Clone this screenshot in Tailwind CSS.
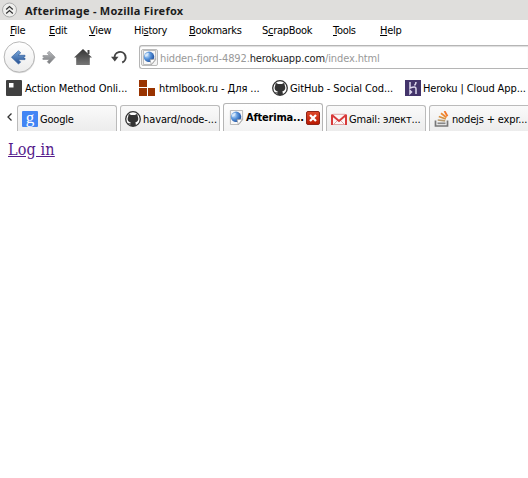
<!DOCTYPE html>
<html lang="en">
<head>
<meta charset="utf-8">
<title>Afterimage</title>
<script src="https://cdn.jsdelivr.net/npm/@tailwindcss/browser@4"></script>
</head>
<body class="w-[528px] h-[478px] overflow-hidden bg-white text-black text-[11px] leading-[14px] whitespace-nowrap font-['DejaVu_Sans_Condensed','DejaVu_Sans',sans-serif] tracking-[-0.2px]">
<svg class="absolute size-0">
  <defs>
    <linearGradient id="blue" x2="0" y2="1"><stop stop-color="#79a8dc"/><stop offset="1" stop-color="#244f91"/></linearGradient>
    <linearGradient id="gray" x2="0" y2="1"><stop stop-color="#b8babd"/><stop offset="1" stop-color="#77797c"/></linearGradient>
    <linearGradient id="dark" x2="0" y2="1"><stop stop-color="#333"/><stop offset="1" stop-color="#777"/></linearGradient>
    <linearGradient id="button" x2="0" y2="1"><stop stop-color="#fff"/><stop offset="1" stop-color="#ececec"/></linearGradient>
    <linearGradient id="red" x2="0" y2="1"><stop stop-color="#e04a2c"/><stop offset="1" stop-color="#b81800"/></linearGradient>
    <radialGradient id="ball" cx=".3" cy=".35" r=".75"><stop stop-color="#cfe4fa"/><stop offset=".45" stop-color="#5b97dd"/><stop offset="1" stop-color="#1a4a9a"/></radialGradient>
    <symbol id="globe" viewBox="0 0 16 16"><path d="M1.500 .5h13v10l-4 5h-9z" fill="#f8f8f8" stroke="#b5b5b5"/><circle cx="7.500" cy="7.300" r="5.600" fill="url(#ball)"/><path d="M3 5l3-2.200 1.500 1-2 2.700-2 1z" fill="#e4f1fc" opacity=".7"/><path d="M14.500 9.500l-6 1 1.500 5z" fill="#fff" stroke="#999" stroke-width=".7"/></symbol>
    <symbol id="cat" viewBox="0 0 16 16"><circle cx="8" cy="8" r="7.300" fill="#fff" stroke="#333" stroke-width="1.300"/><path d="M3.700 2.800l2.400 1.300q1.900-.4 3.800 0l2.400-1.300.5 2.700c1.400 3.300-.2 5.500-2.600 5.900q.6.600.6 1.600v2H5.400v-1.600c-1.700.2-2-.8-2.700-1.600 1 .1 1.300.9 2.700.6q.1-.6.4-1C3.200 11 1.800 9 3.200 5.500z" fill="#333"/></symbol>
  </defs>
</svg>

<header class="flex h-5 items-center bg-[#dfdedc]">
  <svg class="ml-[1px] mr-2 shrink-0" width="16" height="17" viewBox="0 0 16 17"><circle cx="8.500" cy="8" r="7" fill="#efefed" stroke="#aaa"/><path d="M5.200 7.500L8.500 4.500 11.800 7.500M5.200 11.500L8.500 8.500l3.300 3" fill="none" stroke="#333" stroke-width="1.200"/></svg>
  <h1 class="mt-px text-[11px] font-bold text-[#1c1c1c] font-['Noto_Sans',sans-serif] tracking-[0.26px]">Afterimage - Mozilla Firefox</h1>
</header>

<nav class="flex h-5 items-center pl-[10px] pt-0.5 tracking-[-0.3px]">
  <span class="w-[39px]"><u>F</u>ile</span>
  <span class="w-10"><u>E</u>dit</span>
  <span class="w-[45px]"><u>V</u>iew</span>
  <span class="w-[55px]">Hi<u>s</u>tory</span>
  <span class="w-[73px]"><u>B</u>ookmarks</span>
  <span class="w-[71px]">S<u>c</u>rapBook</span>
  <span class="w-[47px]"><u>T</u>ools</span>
  <span><u>H</u>elp</span>
</nav>

<div class="flex h-[35px] items-center">
  <svg class="ml-[2px] shrink-0" width="136" height="35" viewBox="2 40 136 35">
    <circle cx="19.500" cy="57.800" r="15.500" fill="#ddd"/><circle cx="19.300" cy="57" r="15.200" fill="url(#button)" stroke="#b0b0b0" stroke-width=".9"/>
    <path d="M11.500 57.200l7-6.500 2.200 2.200-2.700 2.400h7v1.300h-1.500v1.500H25v1.500h-7l2.700 2.300-2.200 2.200z" fill="url(#blue)" stroke="#315f9d" stroke-width=".7"/>
    <path d="M55.200 57.200l-6-6-2 2 2.200 2.300h-6.500v1.200h1.200v1.300h-1.200v1.500h6.500l-2.200 2.200 2 2z" fill="url(#gray)" stroke="#8b8d90" stroke-width=".6"/>
    <path d="M83 49l9 8.500h-2.200v7.500H76.200v-7.500H74z" fill="url(#dark)"/><path d="M87.500 50h2v4h-2z" fill="#444"/>
    <path d="M114.700 58.500a5.500 5.500 0 1 1 7.500 4" fill="none" stroke="#444" stroke-width="2"/><path d="M111 56.800h7.500l-3.700 4.700z" fill="#444"/>
  </svg>
  <div class="-mt-px ml-px flex h-6 flex-1 items-center rounded-l-[3px] border border-r-0 border-[#b5b5b5] shadow-[inset_0_1px_1px_#ddd]">
    <div class="ml-px flex size-[17px] shrink-0 items-center justify-center rounded-[2px] border border-[#bbb] bg-[#f5f5f5]"><svg width="15" height="15"><use href="#globe"/></svg></div>
    <span class="ml-[2px] mt-[3px] text-[#999] tracking-[-0.12px]">hidden-fjord-4892.<span class="text-[#222]">herokuapp.com</span>/index.html</span>
  </div>
</div>

<div class="flex h-[27px] items-center pl-[6px] tracking-[-0.05px]">
  <svg class="-mt-px mr-[3px] shrink-0" width="16" height="16"><rect width="16" height="16" rx="1" fill="#404040"/><path d="M3 3h4.500v4.500H3z" fill="#fff"/></svg>
  <span class="w-[114px]">Action Method Onli...</span>
  <svg class="-mt-px mr-1 shrink-0" width="16" height="16" fill="#993300"><path d="M0 0h8v7H0zM0 8h8v8H0zM9 8h7v8H9z"/></svg>
  <span class="w-[113px] tracking-[-0.1px]">htmlbook.ru - Для ...</span>
  <svg class="-mt-px mr-[2px] shrink-0" width="16" height="16"><use href="#cat"/></svg>
  <span class="w-[115px] tracking-[-0.1px]">GitHub - Social Cod...</span>
  <svg class="-mt-px mr-[2px] shrink-0" width="16" height="16"><path d="M0 0h16v16H0z" fill="#43346b"/><path d="M5 2v6q6-2.500 6 .8V14M11 2q0 2-1.500 3.500M5 10.500v3l1.500-1.500z" fill="none" stroke="#ddd7ed" stroke-width="1.500"/></svg>
  <span class="tracking-[-0.1px]">Heroku | Cloud App...</span>
</div>

<div class="flex h-[29px] items-end">
  <svg class="mb-[10px] ml-[6px] mr-[5px] shrink-0" width="6" height="8"><path d="M5.500 .5L2 4l3.500 3.500" fill="none" stroke="#333" stroke-width="1.300"/></svg>
  <div class="flex h-[26px] w-[100px] shrink-0 items-center rounded-t-[3px] border border-b-0 border-[#bbb] bg-linear-to-b from-[#fafafa] to-[#ececec] pl-1">
    <svg class="mr-[2px] shrink-0" width="16" height="16"><rect width="16" height="16" rx="1" fill="#4285f4"/><text x="8" y="11.500" text-anchor="middle" fill="#fff" class="text-[17px] font-['Liberation_Serif',serif]">g</text></svg>
    <span class="mt-0.5">Google</span>
  </div>
  <div class="ml-[3px] flex h-[26px] w-[100px] shrink-0 items-center rounded-t-[3px] border border-b-0 border-[#bbb] bg-linear-to-b from-[#fafafa] to-[#ececec] pl-1">
    <svg class="mr-[2px] shrink-0" width="16" height="16"><use href="#cat"/></svg>
    <span class="mt-0.5 tracking-[-0.1px]">havard/node-...</span>
  </div>
  <div class="ml-[3px] flex h-[28px] w-[100px] shrink-0 items-center rounded-t-[3px] border border-b-0 border-[#b5b5b5] bg-linear-to-b from-white to-[#f2f2f2] pl-[5px]">
    <svg class="mr-[2px] shrink-0" width="15" height="15"><use href="#globe"/></svg>
    <b class="mt-px w-[60px]">Afterima...</b>
    <svg class="shrink-0" width="14" height="14"><rect x=".5" y=".5" width="13" height="13" rx="1.500" fill="url(#red)" stroke="#8e2418"/><path d="M4 4l6 6M10 4l-6 6" stroke="#fff" stroke-width="2.300"/></svg>
  </div>
  <div class="ml-[3px] flex h-[26px] w-[100px] shrink-0 items-center rounded-t-[3px] border border-b-0 border-[#bbb] bg-linear-to-b from-[#fafafa] to-[#ececec] pl-1">
    <svg class="mr-[2px] shrink-0" width="16" height="16"><path d="M0 3h16v11H0z" fill="#fbf7f7"/><path d="M2 3.300h12M2 13.500h12M3 13l4-4M13 13L9 9" stroke="#dfa5a5"/><path d="M1 14V3.500M15 14V3.500" stroke="#d83b3b" stroke-width="2"/><path d="M1 4l7 6 7-6" fill="none" stroke="#d83b3b" stroke-width="2"/></svg>
    <span class="mt-0.5">Gmail: элект...</span>
  </div>
  <div class="ml-[3px] flex h-[26px] w-[100px] shrink-0 items-center rounded-tl-[3px] border border-b-0 border-[#bbb] bg-linear-to-b from-[#fafafa] to-[#ececec] pl-1">
    <svg class="mr-[2px] shrink-0" width="16" height="16" fill="none"><path d="M1.500 9.500v5.500h12V9.500" stroke="#777" stroke-width="1.700"/><path d="M3.500 12.300h8" stroke="#888" stroke-width="1.700"/><path d="M3.700 9l7.500.8" stroke="#b59a70" stroke-width="1.700"/><path d="M4.800 5.500l7 2.500" stroke="#d59143" stroke-width="1.700"/><path d="M7 2.200l5.500 4.300" stroke="#ed8b32" stroke-width="1.800"/><path d="M10.500 0l3 5.300" stroke="#f47828" stroke-width="1.800"/></svg>
    <span class="mt-0.5 tracking-[-0.15px]">nodejs + expr...</span>
  </div>
</div>

<main class="px-2 pt-2 text-base leading-[22px] tracking-[0.15px] font-['DejaVu_Serif_Condensed','DejaVu_Serif',serif]"><a class="text-[#551a8b] underline" href="#">Log in</a></main>
</body>
</html>
